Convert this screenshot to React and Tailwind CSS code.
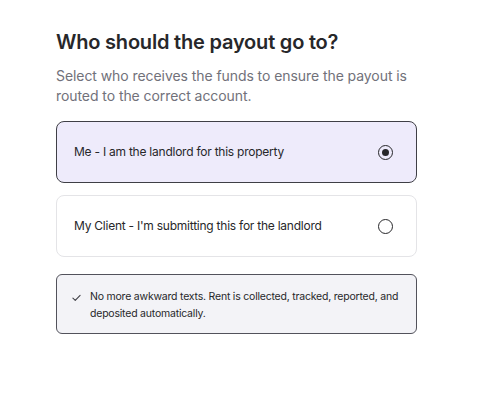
import React, { useState } from 'react';

const options = [
  { id: 'me', label: 'Me - I am the landlord for this property' },
  { id: 'client', label: "My Client - I'm submitting this for the landlord" },
];

const Radio = ({ checked }) => (
  <span className="flex h-[15px] w-[15px] items-center justify-center rounded-full border-[1.5px] border-[#27272a]">
    {checked && <span className="h-[7px] w-[7px] rounded-full bg-[#27272a]" />}
  </span>
);

const App = () => {
  const [payee, setPayee] = useState('me');

  return (
    <div className="min-h-[400px] bg-white px-14 pt-7 font-['Inter',sans-serif]">
      <div className="w-[361px]">
        <h1 className="text-xl font-semibold leading-7 tracking-[-0.01em] text-[#27272a]">
          Who should the payout go to?
        </h1>
        <p className="mt-2.5 text-sm leading-5 tracking-[-0.005em] text-[#71717a]">
          Select who receives the funds to ensure the payout is routed to the correct account.
        </p>

        {/* options */}
        <div className="mt-[15px] flex flex-col gap-3">
          {options.map((opt) => {
            const active = payee === opt.id;
            return (
              <button
                key={opt.id}
                onClick={() => setPayee(opt.id)}
                className={`flex h-[62px] items-center justify-between rounded-lg border pl-[17px] pr-[23px] text-left ${
                  active ? 'border-[#3f3f46] bg-[#eeebfb]' : 'border-[#e4e4e7] bg-white'
                }`}
              >
                <span className="text-[12px] tracking-[-0.02em] text-[#27272a]">{opt.label}</span>
                <Radio checked={active} />
              </button>
            );
          })}
        </div>

        {/* note */}
        <div className="mt-[17px] flex gap-[9px] rounded-md border border-[#52525b] bg-[#f3f3f7] pb-[11px] pl-[15px] pr-4 pt-[13px]">
          <svg className="mt-[5px] h-[9px] w-[9px] shrink-0" viewBox="0 0 10 10" fill="none" stroke="#3f3f46" strokeWidth="1.2" strokeLinecap="round" strokeLinejoin="round">
            <path d="M1 5.6 3.6 8.2 9 2.6" />
          </svg>
          <p className="text-[10.5px] leading-[17px] tracking-[-0.02em] text-[#27272a]">
            No more awkward texts. Rent is collected, tracked, reported, and deposited automatically.
          </p>
        </div>
      </div>
    </div>
  );
};

export default App;
